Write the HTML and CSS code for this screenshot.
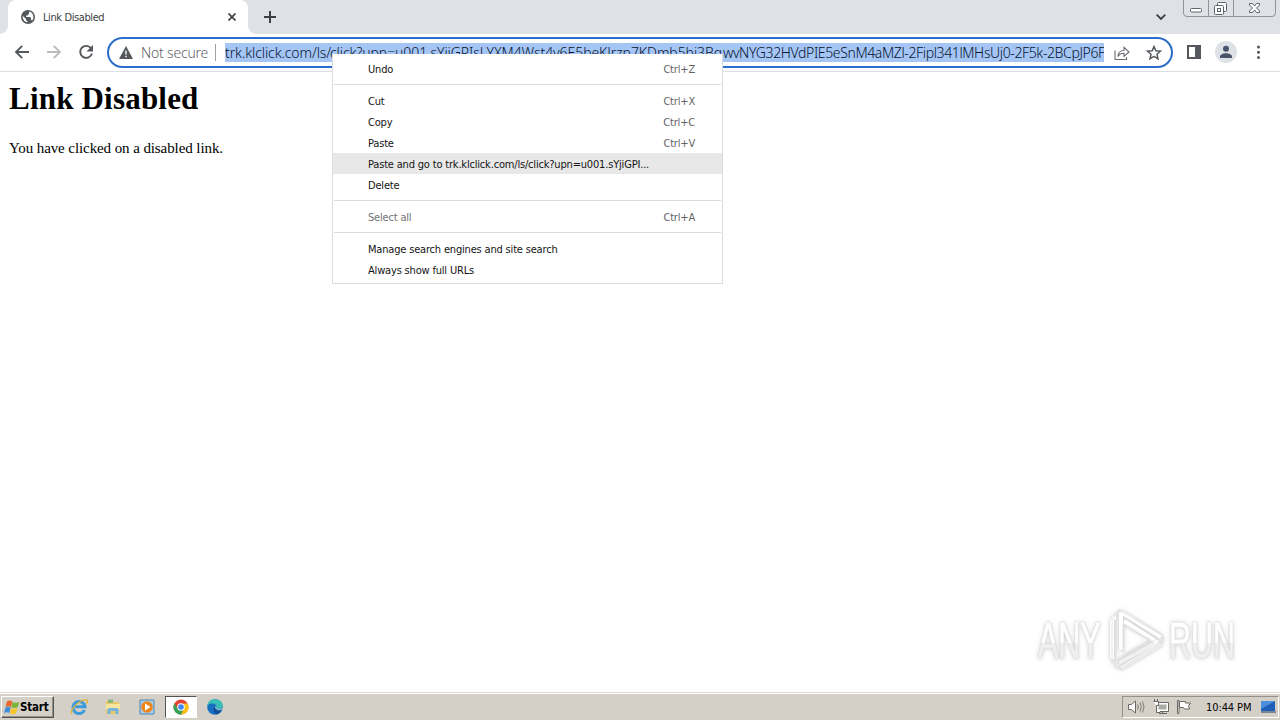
FILE: index.html
```
<!DOCTYPE html>
<html lang="en">
<head>
<meta charset="utf-8">
<title>Link Disabled</title>
<link rel="stylesheet" href="styles.css">
</head>
<body>
<div class="screen">
  <header class="tabstrip">
    <div class="tab">
      <svg class="globe" width="14" height="14" viewBox="0 0 14 14"><circle cx="7" cy="7" r="7" fill="#54585d"/><path d="M1.7 5.8 5 9v1l1.4 1.2v1.2C3.500 12 1.500 9.500 1.700 5.800zM8 1.600C11 2 12.500 4.500 12.400 7.200c0 1.300-.5 2.400-1.200 3.300L10 9.700V8L9 7H5.200V5.600h1.600V4.200H8z" fill="#fff"/></svg>
      <span class="tab-title">Link Disabled</span>
      <svg class="tab-close" width="8" height="8" viewBox="0 0 8 8"><path d="M.5.5l7 7m0-7l-7 7" stroke="#3c4043" stroke-width="1.600"/></svg>
    </div>
    <svg class="new-tab" width="12" height="12" viewBox="0 0 12 12"><path d="M6 0v12M0 6h12" stroke="#3c4043" stroke-width="2"/></svg>
    <svg class="tab-search" width="10" height="6" viewBox="0 0 10 6"><path d="M.7.700 5 5 9.300.7" fill="none" stroke="#3c4043" stroke-width="1.800"/></svg>
    <svg class="window-buttons" width="94" height="18" viewBox="0 0 94 18">
      <path d="M.5 0v13q0 3.500 3.500 3.500h85q3.500 0 3.500-3.500V0M25.500 0v16M50.500 0v16" fill="none" stroke="#91959b"/>
      <g fill="#fff" stroke="#5f646b"><rect x="7.500" y="8.500" width="11" height="3.500" rx="1"/><rect x="34.500" y="2.500" width="9" height="9" rx="1"/><rect x="31.500" y="5.500" width="9" height="9" rx="1"/><rect x="34.500" y="8.500" width="3" height="3"/><path d="M66.500 3.500h3l2 2.500 2-2.500h3v1.500L73.500 8l3 3v1.500h-3l-2-2.500-2 2.500h-3V11l3-3-3-3z"/></g>
    </svg>
  </header>
  <div class="toolbar">
    <svg class="nav" width="100" height="38" viewBox="0 0 100 38">
      <path d="M29 18H16.500M22.200 11.800 16 18l6.200 6.200" fill="none" stroke="#54585d" stroke-width="1.900"/>
      <path d="M47 18h12.500M53.800 11.800 60 18l-6.200 6.200" fill="none" stroke="#babcbe" stroke-width="1.900"/>
      <path d="M91 14.200A6 6 0 1 0 92 19.500" fill="none" stroke="#54585d" stroke-width="1.900"/><path d="M93 11v6.500h-6.500z" fill="#54585d"/>
    </svg>
    <div class="omnibox">
      <svg class="warning" width="14" height="13" viewBox="0 0 14 13"><path d="M7 0l7 13H0z" fill="#54585d"/><path d="M7 4.500v4M7 9.800v1.500" stroke="#fff" stroke-width="1.400"/></svg>
      <span class="not-secure">Not secure</span>
      <i class="divider"></i>
      <div class="url"><span class="url-host">trk.klclick.com/ls/</span><span class="url-mid">click?upn=u001.sYjiGPIsLYXM4Wst4v6E5beKJrzp7KDmb5bi3Bq</span><span class="url-end">wvNYG32HVdPIE5eSnM4aMZl-2Fipl341lMHsUj0-2F5k-2BCpJP6F</span></div>
      <svg class="share" width="16" height="14" viewBox="0 0 16 14"><path d="M1 4.500v9h11.500v-2.500M4 10.500c.3-4 2.500-6 6-6V1.300L15 6l-5 4.200V7.300c-2.700 0-4.700 1-6 3.200z" fill="none" stroke="#6b6e72" stroke-width="1.100"/></svg>
      <svg class="star" width="16" height="15" viewBox="0 0 16 15"><path d="M8 1.500l1.800 4.300 4.700.4-3.500 3.100 1 4.500L8 11.400l-4 2.400 1-4.500L1.500 6.200l4.700-.4z" fill="none" stroke="#54585d" stroke-width="1.500"/></svg>
    </div>
    <svg class="tools" width="100" height="38" viewBox="0 0 100 38">
      <path d="M8 12h12v12H8z" fill="none" stroke="#54585d" stroke-width="2"/><path d="M15 12h6v12h-6z" fill="#54585d"/>
      <circle cx="46" cy="18" r="11" fill="#dee1e6"/><circle cx="46" cy="14.800" r="3" fill="#46536b"/><path d="M40 24v-1.500c0-2 3-3.300 6-3.300s6 1.300 6 3.300V24z" fill="#46536b"/>
      <g fill="#54585d"><circle cx="78.500" cy="13" r="1.500"/><circle cx="78.500" cy="18.200" r="1.500"/><circle cx="78.500" cy="23.400" r="1.500"/></g>
    </svg>
  </div>
  <main class="page">
    <h1>Link Disabled</h1>
    <p>You have clicked on a disabled link.</p>
  </main>
  <footer class="taskbar">
    <div class="start">
      <svg width="16" height="15" viewBox="0 0 16 15"><path d="M3 1.500q3-2 5.500 0L7 7q-2.500-1.500-5.500 0z" fill="#e9672e"/><path d="M8.800 2q3 1.500 6.500 0L13.800 7.300q-3.500 1.500-6.500 0z" fill="#79b63a"/><path d="M1.500 7.500q2.500-1.500 5.300 0L5.300 13Q3 11.500 0 13z" fill="#3f8ed7"/><path d="M7.200 8q3 1.500 6.300 0L12 13.500q-3.500 1.500-6.300 0z" fill="#f7c52e"/></svg>
      <span>Start</span>
    </div>
    <div class="launch">
      <svg width="18" height="18" viewBox="0 0 18 18"><path d="M14.500 12A6 6 0 1 1 15 8.800H5" fill="none" stroke="#3b9bdc" stroke-width="3"/><path d="M2 16C-1 12 10 1 17 2c1 1 0 3-1 4" fill="none" stroke="#e3b437" stroke-width="1.300"/></svg>
    </div>
    <div class="launch">
      <svg width="18" height="18" viewBox="0 0 18 18"><path d="M2 3h6l1 1h6v12H2z" fill="#e9c967"/><path d="M4 1.500h5V5H4z" fill="#86b875"/><path d="M2 6h14v5H2z" fill="#f7e49f"/><path d="M3.500 16v-4q0-2 2-2h7q2 0 2 2v4h-3v-3h-5v3z" fill="#71b5de"/></svg>
    </div>
    <div class="launch">
      <svg width="18" height="18" viewBox="0 0 18 18"><path d="M2 2h14v14H2z" fill="#a9cee7" stroke="#4d87b8"/><circle cx="9" cy="9" r="5.800" fill="#ef8519"/><path d="M7 5.500 12.500 9 7 12.500z" fill="#fff"/></svg>
    </div>
    <div class="launch active">
      <svg width="18" height="18" viewBox="0 0 18 18"><circle cx="9" cy="9" r="7.500" fill="#e64334"/><path d="M2.500 5.200 9 16.500A7.500 7.500 0 0 1 2.500 5.200z" fill="#35a354"/><path d="M9 16.500 12 9l-.5-3.500h4.200A7.500 7.500 0 0 1 9 16.500z" fill="#fbc116"/><path d="M3 12.500 8 11l3 1.500-2 4Q5 16.500 3 12.500z" fill="#35a354"/><circle cx="9" cy="9" r="3.800" fill="#fff"/><circle cx="9" cy="9" r="2.800" fill="#4285f4"/></svg>
    </div>
    <div class="launch">
      <svg width="18" height="18" viewBox="0 0 18 18"><circle cx="9" cy="9" r="7.800" fill="#176fc1"/><path d="M1.300 8C2 3 5 1.200 9 1.200c5 0 8 3 7.800 6.600-.2 3-4.500 4-6.500 2.800C12 7 8 5 5 5.600 3 6 2 7 1.300 8z" fill="#39bfb5"/><path d="M9.500 8c-1.500 2 0 5.500 5.900 4.800-1 1.500-2.500 3-4.500 3.500C7 15 6.500 9.500 9.500 8z" fill="#124f94"/><path d="M9.500 8.200c-.8 1.500.8 3.800 4.500 3.500 1.500 0 2.500-.5 3-1.200v-.8c-2 1.800-6 1.600-6.700.6.500-.6.400-1.400-.8-2.100z" fill="#d4d0c8"/></svg>
    </div>
    <div class="tray">
      <svg width="70" height="20" viewBox="0 0 70 20">
        <g fill="#fff" stroke="#696763"><path d="M5.500 7.500h3L12.500 4v12L8.500 12.500h-3z"/><path d="M14.500 7.500q1.500 2.500 0 5M17 5.500q2.500 4.500 0 9M19.500 4.500q3 5.500 0 11" fill="none" stroke-width=".8"/><path d="M33.500 5.500h12v9h-12z"/><path d="M35.500 7.500h8v5h-8z" fill="#aaa8a4" stroke="none"/><path d="M36 16.500h8M39.500 15v1.500"/><path d="M30.500 4.500h5v4h-2v7h4M31.500 2v2.500M34.500 2v2.500"/><path d="M54.500 3.500v13h1.500v-13zM56.500 4.500h6V6h5l-2 3 1 3h-5l-1-1.500h-4z"/></g>
      </svg>
      <span class="clock">10:44 PM</span>
      <svg class="desktop" width="17" height="14" viewBox="0 0 17 14"><path d="M1 1h14v10H1z" fill="#205fb7"/><path d="M1 1h14L1 9z" fill="#4d8fdc"/><path d="M1 12h15" stroke="#203c64"/></svg>
    </div>
  </footer>

  <div class="menu">
    <div class="item"><span>Undo</span><kbd>Ctrl+Z</kbd></div>
    <hr>
    <div class="item"><span>Cut</span><kbd>Ctrl+X</kbd></div>
    <div class="item"><span>Copy</span><kbd>Ctrl+C</kbd></div>
    <div class="item"><span>Paste</span><kbd>Ctrl+V</kbd></div>
    <div class="item hover"><span>Paste and go to trk.klclick.com/ls/click?upn=u001.sYjiGPI...</span></div>
    <div class="item"><span>Delete</span></div>
    <hr>
    <div class="item disabled"><span>Select all</span><kbd>Ctrl+A</kbd></div>
    <hr>
    <div class="item"><span>Manage search engines and site search</span></div>
    <div class="item"><span>Always show full URLs</span></div>
  </div>

  <div class="watermark">
    <span class="wm-word wm-any">ANY</span>
    <svg width="60" height="64" viewBox="0 0 60 64"><g fill="none" stroke-linejoin="round"><path d="M12 55 52 33M14 60 54 36" stroke="#f0f0f0" stroke-width="4"/><path d="M5 11v40M14 4v38M14 4l40 25M17 13l33 21M5 11l4-2" stroke="#fff" stroke-width="4"/><path d="M5 55V12l7-10 44 26v6L14 61l-6-2v-6l42-22M8 50V12M16 44V16l28 16-28 16" stroke="#e4e4e4" stroke-width="1"/></g></svg>
    <span class="wm-word wm-run">RUN</span>
  </div>
</div>
</body>
</html>
```
FILE: styles.css
```
* { box-sizing: border-box; }
body { margin: 0; background: #fff; }
svg { display: block; flex: none; }
.screen { position: relative; width: 1280px; height: 720px; overflow: hidden; display: flex; flex-direction: column; font: 11px "DejaVu Sans Condensed", "DejaVu Sans", sans-serif; }
.tabstrip { height: 34px; background: #dee1e6; display: flex; align-items: flex-start; padding-left: 8px; flex: none; }
.tab { position: relative; width: 240px; height: 34px; background: #fff; border-radius: 8px 8px 0 0; display: flex; align-items: center; padding: 0 12px 0 13px; }
.tab::before, .tab::after { content: ""; position: absolute; bottom: 0; width: 8px; height: 8px; }
.tab::before { left: -8px; background: radial-gradient(circle at 0 0, transparent 7.5px, #fff 8px); }
.tab::after { right: -8px; background: radial-gradient(circle at 100% 0, transparent 7.5px, #fff 8px); }
.tab-title { margin-left: 8px; color: #3c4043; letter-spacing: -.4px; white-space: nowrap; }
.tab-close { margin-left: auto; }
.new-tab { margin: 11px 0 0 16px; }
.tab-search { margin: 14px 17px 0 auto; }
.window-buttons { margin-right: 3px; }
.toolbar { height: 38px; border-bottom: 1px solid #dcdee1; display: flex; flex: none; }
.nav { margin-right: 7px; }
.omnibox { width: 1066px; height: 31px; margin-top: 3px; border: 2px solid #2a6dcb; border-radius: 16px; display: flex; align-items: center; padding-left: 10px; }
.not-secure { width: 67px; margin-left: 8px; color: #5f6368; font: 14px "Noto Sans", sans-serif; font-weight: 300; white-space: nowrap; letter-spacing: -.2px; }
.divider { width: 1px; height: 17px; background: #9da1a6; margin: 0 9px 0 7px; }
.url { width: 879px; height: 19px; background: #a5c5f5; color: #061630; overflow: hidden; white-space: nowrap; font: 14px/19px "Noto Sans", sans-serif; font-weight: 300; display: flex; }
.url-host { width: 105px; flex: none; letter-spacing: -.1px; }
.url-mid { width: 393px; flex: none; letter-spacing: -.07px; }
.url-end { flex: none; letter-spacing: -.38px; }
.share { margin-left: 10px; }
.star { margin-left: 16px; }
.tools { margin-left: 7px; }
.page { flex: 1; padding: 9px; color: #000; font: 15px "Liberation Serif", serif; }
.page h1 { margin: 0; font-size: 31px; line-height: 36px; letter-spacing: .2px; white-space: nowrap; }
.page p { margin: 22px 0 0; line-height: 18px; white-space: nowrap; letter-spacing: -.09px; }
.taskbar { height: 28px; background: #d4d0c8; border-top: 1px solid #dedbd5; box-shadow: inset 0 1px #fff; display: flex; align-items: center; padding-right: 1px; flex: none; }
.start { width: 53px; height: 22px; margin: 1px 9px 0 1px; border: 1px solid; border-color: #fff #55534f #55534f #fff; box-shadow: inset -1px -1px #94918b; display: flex; align-items: center; padding-left: 2px; font-weight: bold; font-size: 11.5px; letter-spacing: -.2px; }
.launch { width: 32px; height: 22px; margin: 1px 2px 0 0; display: flex; align-items: center; justify-content: center; border: 1px solid transparent; }
.active { background: #fff; border-color: #55534f #fff #fff #55534f; }
.tray { width: 157px; height: 22px; margin: 1px 0 0 auto; border: 1px solid; border-color: #94918b #fff #fff #94918b; display: flex; align-items: center; }
.clock { width: 47px; margin-left: 13px; white-space: nowrap; letter-spacing: -.1px; }
.desktop { margin-left: 7px; }
.menu { position: absolute; left: 332px; top: 54px; width: 391px; height: 230px; border: 1px solid #dadce0; border-top: 0; background: #fff; padding: 4px 0; color: #141414; }
.item { height: 21px; display: flex; justify-content: space-between; align-items: center; padding: 1px 27px 0 35px; white-space: nowrap; letter-spacing: -.18px; }
.item kbd { font: inherit; color: #5f6368; }
.menu hr { height: 1px; border: 0; margin: 5px 1px; background: #dadce0; }
.hover { background: #e8e8e8; }
.disabled { color: #727272; }
.watermark { position: absolute; left: 1038px; top: 608px; width: 200px; height: 64px; display: flex; align-items: center; filter: drop-shadow(0 0 1px #ccc) drop-shadow(0 0 2px #ddd); }
.wm-word { width: 108px; height: 56px; font: 50px/58px "Liberation Sans", sans-serif; -webkit-text-stroke: 1px transparent; background: linear-gradient(#fff 55%, #efefef 55%); background-clip: text; -webkit-background-clip: text; color: transparent; transform: scaleX(.61); transform-origin: left; white-space: nowrap; flex: none; }
.wm-any { margin-right: -39px; }
.wm-run { margin-left: 2px; margin-right: -44px; }
```
